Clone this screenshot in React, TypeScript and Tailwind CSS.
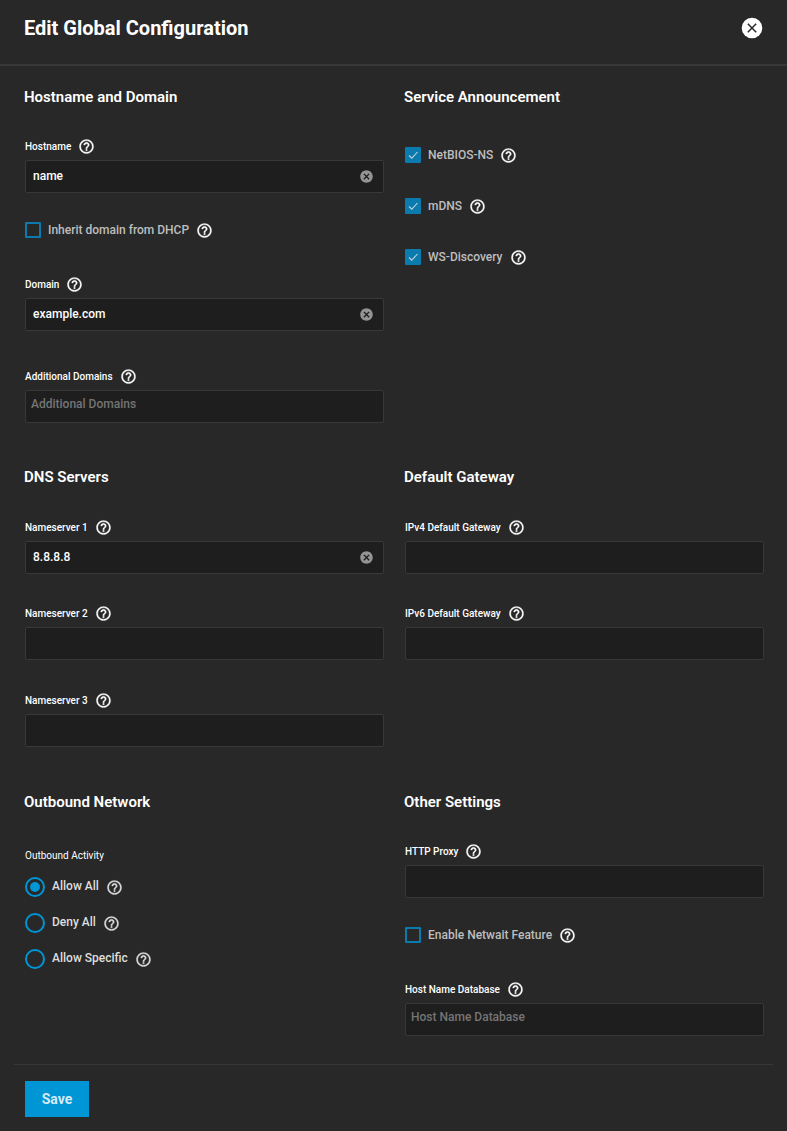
import React, { useId, useState } from 'react';
import { MdCancel } from 'react-icons/md';

const HelpButton: React.FC<{ muted?: boolean }> = ({ muted }) => (
  <button type="button" aria-label="Help" className={muted ? 'ml-[7px] shrink-0 text-[#dedede]' : 'ml-[7px] shrink-0 text-white'}>
    <svg width="17" height="17" viewBox="0 0 24 24" fill="currentColor" stroke="currentColor" strokeWidth="0.4">
      <path d="M11 18h2v-2h-2v2zm1-16C6.48 2 2 6.48 2 12s4.48 10 10 10 10-4.48 10-10S17.52 2 12 2zm0 18c-4.41 0-8-3.59-8-8s3.59-8 8-8 8 3.59 8 8-3.59 8-8 8zm0-14c-2.21 0-4 1.79-4 4h2c0-1.1.9-2 2-2s2 .9 2 2c0 2-3 1.75-3 5h2c0-2.25 3-2.5 3-5 0-2.21-1.79-4-4-4z" />
    </svg>
  </button>
);

const Heading = ({ children }: { children: React.ReactNode }) => (
  <h2 className="text-[15px] leading-6 font-semibold text-white">{children}</h2>
);

interface TextFieldProps {
  label: string;
  initial?: string;
  className: string;
}

const TextField: React.FC<TextFieldProps> = ({ label, initial = '', className }) => {
  const id = useId();
  const [value, setValue] = useState(initial);
  return (
    <div className={`pl-px ${className}`}>
      <div className="flex h-[17px] items-center">
        <label htmlFor={id} className="text-[10px] leading-4 font-medium text-white">{label}</label>
        <HelpButton />
      </div>
      <div className="mt-[5px] flex h-[33px] items-center rounded-xs border border-[#383838] bg-[#1e1e1e] pr-[9px] pb-px pl-[7px]">
        <input
          id={id}
          type="text"
          value={value}
          onChange={(e) => setValue(e.target.value)}
          className="h-full min-w-0 flex-1 bg-transparent pb-px text-xs font-medium text-white outline-none"
        />
        {value && (
          <button type="button" aria-label="Clear" onClick={() => setValue('')} className="text-[#949494]">
            <MdCancel size={15} />
          </button>
        )}
      </div>
    </div>
  );
};

// Free-entry list, keeps its label as the placeholder
const ChipsField: React.FC<{ label: string; className: string }> = ({ label, className }) => {
  const id = useId();
  return (
    <div className={`pl-px ${className}`}>
      <div className="flex h-[17px] items-center">
        <label htmlFor={id} className="text-[10px] leading-4 font-medium text-white">{label}</label>
        <HelpButton />
      </div>
      <input
        id={id}
        type="text"
        placeholder={label}
        className="mt-[5px] block h-[33px] w-full rounded-xs border border-[#383838] bg-[#1e1e1e] px-[5px] pb-1.5 text-xs font-medium text-white outline-none placeholder:text-[#757575]"
      />
    </div>
  );
};

const Checkbox: React.FC<{ label: string; checked?: boolean; className: string }> = ({ label, checked = false, className }) => (
  <div className={`flex h-4 items-center pl-px ${className}`}>
    <label className="flex items-center text-xs font-medium text-[#bebebe]">
      <span className="mr-[7px] grid size-4">
        <input
          type="checkbox"
          defaultChecked={checked}
          className="peer col-start-1 row-start-1 size-4 appearance-none rounded-[1px] border-2 border-[#0b7aac] checked:bg-[#0b7aac]"
        />
        <svg
          viewBox="0 0 16 16"
          className="pointer-events-none invisible col-start-1 row-start-1 size-4 peer-checked:visible"
          fill="none"
          stroke="#bfd3dc"
          strokeWidth="1.1"
        >
          <path d="M4 8.5 6.8 11.2 12.5 5" />
        </svg>
      </span>
      {label}
    </label>
    <HelpButton />
  </div>
);

const Radio: React.FC<{ label: string; checked?: boolean }> = ({ label, checked = false }) => (
  <div className="flex h-5 items-center pl-px">
    <label className="flex items-center text-xs font-medium text-[#dedede]">
      <input
        type="radio"
        name="outbound"
        defaultChecked={checked}
        className="mr-[7px] grid size-5 appearance-none place-items-center rounded-full border-2 border-[#0095d5] before:size-2.5 before:rounded-full checked:before:bg-[#0095d5]"
      />
      <span className="pb-0.5">{label}</span>
    </label>
    <HelpButton muted />
  </div>
);

function App(): React.ReactNode {
  return (
    <div className="min-h-screen bg-[#282828] font-['Roboto',sans-serif]">
      <header className="flex h-[66px] items-center justify-between border-b-2 border-[#383838] pr-6 pb-2 pl-6">
        <h1 className="text-xl leading-7 font-bold text-white">Edit Global Configuration</h1>
        <button type="button" aria-label="Close">
          <svg width="22" height="22" viewBox="0 0 22 22">
            <circle cx="11" cy="11" r="10.3" fill="#fff" />
            <path d="M6.8 6.8 15.2 15.2M15.2 6.8 6.8 15.2" stroke="#282828" strokeWidth="1.5" />
          </svg>
        </button>
      </header>

      <form onSubmit={(e) => e.preventDefault()}>
        <div className="pt-[19px] pr-[23px] pl-6">
          <div className="grid grid-cols-2 gap-x-5">
            <section>
              <Heading>Hostname and Domain</Heading>
              <TextField label="Hostname" initial="name" className="mt-[29px]" />
              <Checkbox label="Inherit domain from DHCP" className="mt-[29px]" />
              <TextField label="Domain" initial="example.com" className="mt-[38px]" />
              <ChipsField label="Additional Domains" className="mt-[37px]" />
            </section>
            <section>
              <Heading>Service Announcement</Heading>
              <Checkbox label="NetBIOS-NS" checked className="mt-[38px]" />
              <Checkbox label="mDNS" checked className="mt-[35px]" />
              <Checkbox label="WS-Discovery" checked className="mt-[35px]" />
            </section>
          </div>

          <div className="mt-[42px] grid grid-cols-2 gap-x-5">
            <section>
              <Heading>DNS Servers</Heading>
              <TextField label="Nameserver 1" initial="8.8.8.8" className="mt-[30px]" />
              <TextField label="Nameserver 2" className="mt-[31px]" />
              <TextField label="Nameserver 3" className="mt-8" />
            </section>
            <section>
              <Heading>Default Gateway</Heading>
              <TextField label="IPv4 Default Gateway" className="mt-[30px]" />
              <TextField label="IPv6 Default Gateway" className="mt-[31px]" />
            </section>
          </div>

          <div className="mt-[43px] grid grid-cols-2 gap-x-5">
            <section>
              <Heading>Outbound Network</Heading>
              <fieldset className="mt-[34px]">
                <legend className="pl-px text-[10px] leading-4 text-white">Outbound Activity</legend>
                <div className="mt-[13px] flex flex-col gap-4">
                  <Radio label="Allow All" checked />
                  <Radio label="Deny All" />
                  <Radio label="Allow Specific" />
                </div>
              </fieldset>
            </section>
            <section>
              <Heading>Other Settings</Heading>
              <TextField label="HTTP Proxy" className="mt-[29px]" />
              <Checkbox label="Enable Netwait Feature" className="mt-[29px]" />
              <ChipsField label="Host Name Database" className="mt-[38px]" />
            </section>
          </div>
        </div>

        <footer className="mx-3.5 mt-7 border-t border-[#383838] px-[11px] pt-4 pb-3.5">
          <button type="submit" className="h-9 w-16 bg-[#0095d5] text-sm font-bold text-[#d4ebf6]">Save</button>
        </footer>
      </form>
    </div>
  );
}

export default App;
